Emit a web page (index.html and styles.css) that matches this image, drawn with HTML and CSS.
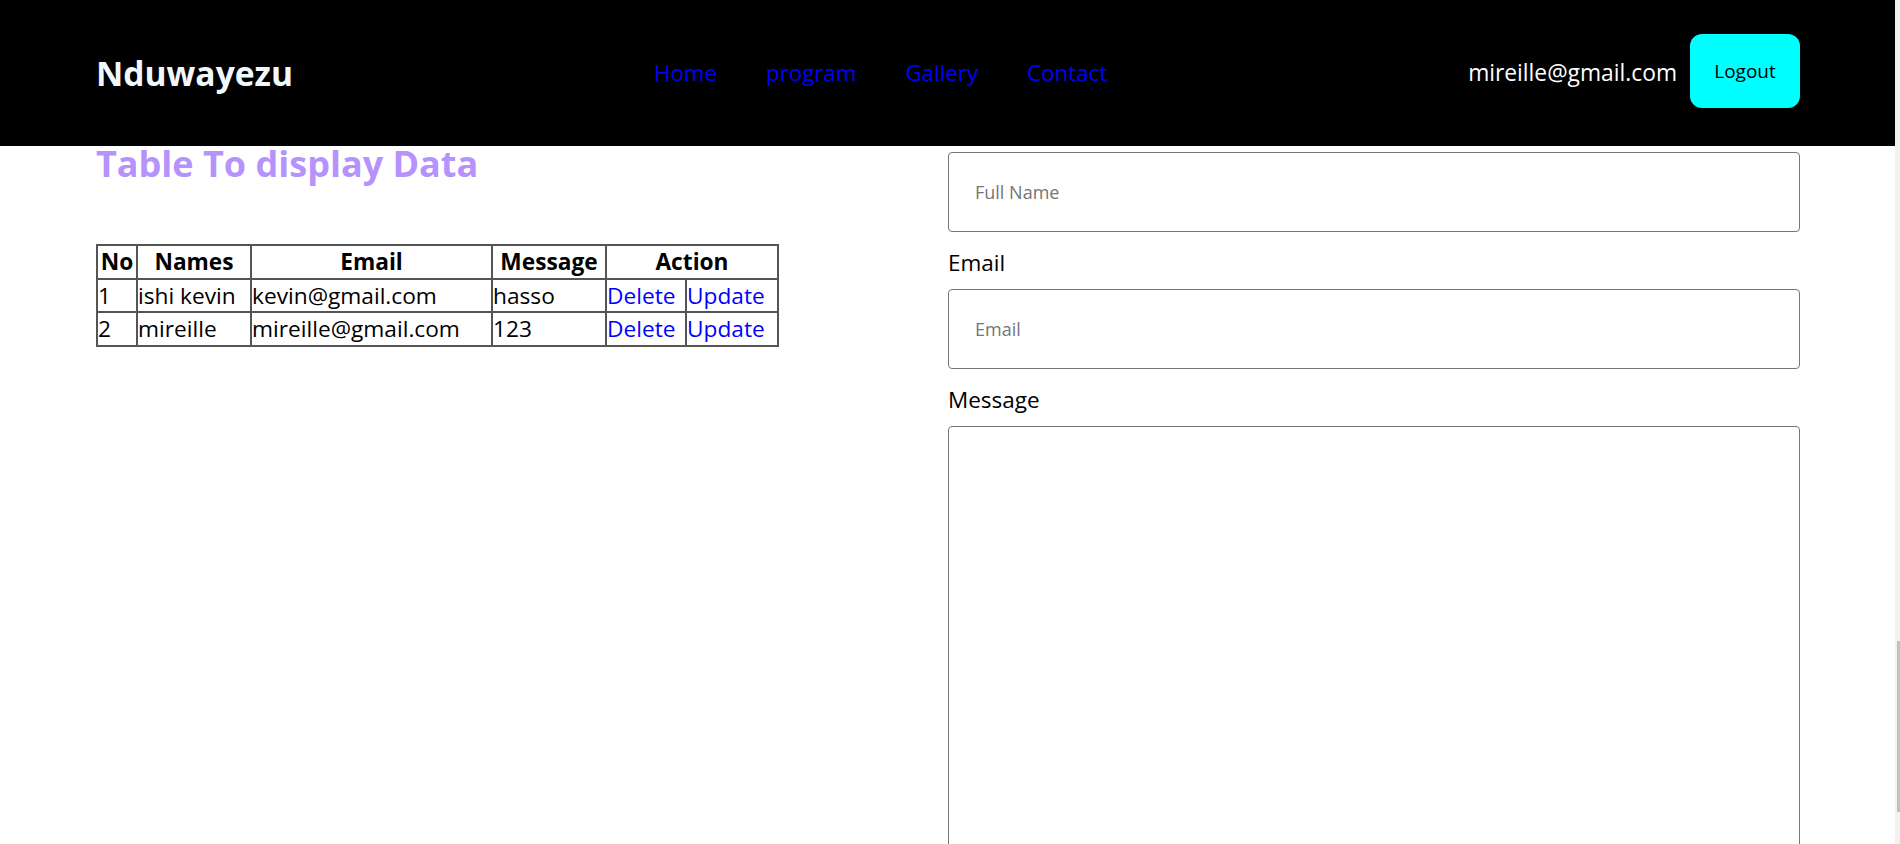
FILE: index.html
```html
<!DOCTYPE html>
<html lang="en">
<head>
<meta charset="utf-8">
<title>Nduwayezu</title>
<link rel="stylesheet" href="styles.css">
</head>
<body>
<div class="app">
  <div class="page">
    <header class="topbar">
      <div class="logo">Nduwayezu</div>
      <nav class="nav">
        <a href="#">Home</a>
        <a href="#">program</a>
        <a href="#">Gallery</a>
        <a href="#">Contact</a>
      </nav>
      <div class="user">
        <span class="user-email">mireille@gmail.com</span>
        <button class="logout" type="button">Logout</button>
      </div>
    </header>
    <main class="content">
      <section class="data">
        <h1 class="title">Table To display Data</h1>
        <table class="grid">
          <colgroup>
            <col class="c-no">
            <col class="c-name">
            <col class="c-email">
            <col class="c-msg">
            <col class="c-del">
            <col class="c-upd">
          </colgroup>
          <thead>
            <tr><th>No</th><th>Names</th><th>Email</th><th>Message</th><th colspan="2">Action</th></tr>
          </thead>
          <tbody>
            <tr><td>1</td><td>ishi kevin</td><td>kevin@gmail.com</td><td>hasso</td><td><a href="#">Delete</a></td><td><a href="#">Update</a></td></tr>
            <tr><td>2</td><td>mireille</td><td>mireille@gmail.com</td><td>123</td><td><a href="#">Delete</a></td><td><a href="#">Update</a></td></tr>
          </tbody>
        </table>
      </section>
      <form class="form">
        <input class="field" type="text" placeholder="Full Name">
        <label class="label">Email</label>
        <input class="field" type="email" placeholder="Email">
        <label class="label">Message</label>
        <textarea class="field area"></textarea>
      </form>
    </main>
  </div>
  <div class="scrollbar"><div class="thumb"></div></div>
</div>
</body>
</html>
```

FILE: styles.css
```css
html, body {
  margin: 0;
  padding: 0;
  height: 100%;
  overflow: hidden;
  background: #fff;
  font-family: "Open Sans", "Noto Sans", sans-serif;
}

.app {
  display: flex;
  height: 100vh;
  overflow: hidden;
}

.page {
  flex: 1;
  min-width: 0;
}

.scrollbar {
  width: 3px;
  padding-left: 2px;
  padding-top: 641px;
  background: #f1f1f1;
  flex: none;
}

.thumb {
  height: 171px;
  background: #c1c1c1;
}

.topbar {
  height: 146px;
  background: #000;
  display: flex;
  align-items: center;
  justify-content: space-between;
  padding: 0 95px 0 96px;
  box-sizing: border-box;
}

.logo {
  color: #f0f8ff;
  font-weight: 700;
  font-size: 33.6px;
  line-height: 40px;
}

.nav {
  display: flex;
  gap: 49px;
}

.nav a {
  color: #0000ff;
  text-decoration: none;
  font-size: 22.3px;
  line-height: 30px;
}

.user {
  display: flex;
  align-items: center;
  gap: 13px;
}

.user-email {
  color: #fff;
  font-size: 22.8px;
  line-height: 30px;
}

.logout {
  width: 110px;
  height: 74px;
  margin-bottom: 5px;
  border: none;
  border-radius: 12px;
  background: #00ffff;
  color: #000;
  font-family: "Open Sans", "Noto Sans", sans-serif;
  font-size: 19px;
  padding: 0;
}

.content {
  display: grid;
  grid-template-columns: 1fr 1fr;
  padding: 0 95px 0 96px;
}

.title {
  margin: 1px 0 63px;
  color: #b592fc;
  font-size: 36px;
  line-height: 34px;
  font-weight: 700;
}

.grid {
  border-collapse: collapse;
  table-layout: fixed;
  width: 681px;
  font-size: 22.7px;
  line-height: 31.5px;
  color: #000;
}

.c-no { width: 40px; }
.c-name { width: 114px; }
.c-email { width: 241px; }
.c-msg { width: 114px; }
.c-del { width: 80px; }
.c-upd { width: 92px; }

.grid th,
.grid td {
  border: 2px solid #555;
  padding: 0;
  white-space: nowrap;
  overflow: hidden;
}

.grid th {
  font-weight: 700;
  text-align: center;
}

.grid td {
  text-align: left;
}

.grid a {
  color: #0000ff;
  text-decoration: none;
}

.form {
  display: flex;
  flex-direction: column;
  padding-top: 6px;
}

.field {
  box-sizing: border-box;
  width: 100%;
  height: 80px;
  border: 1px solid #767676;
  border-radius: 4px;
  padding: 0 26px;
  font-family: "Open Sans", "Noto Sans", sans-serif;
  font-size: 18px;
  color: #000;
  background: #fff;
  margin: 0;
}

.field::placeholder {
  color: #757575;
}

.area {
  height: 500px;
  resize: vertical;
}

.label {
  font-size: 22.5px;
  line-height: 30px;
  margin: 16px 0 11px;
  color: #000;
}
```
